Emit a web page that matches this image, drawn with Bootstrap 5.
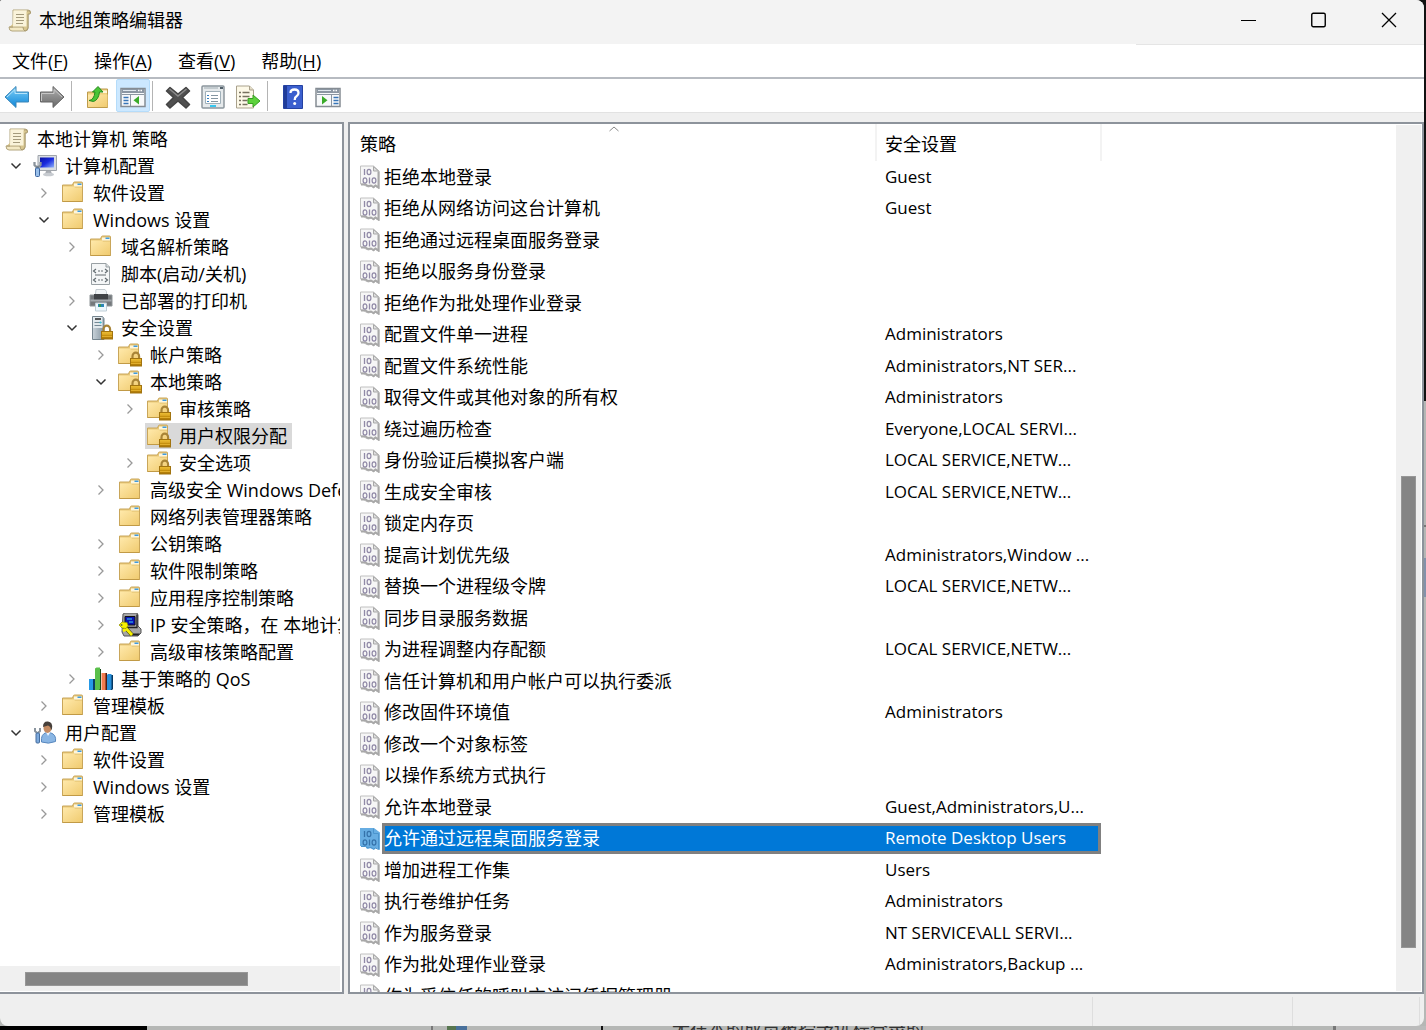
<!DOCTYPE html>
<html lang="zh-CN">
<head>
<meta charset="utf-8">
<meta name="viewport" content="width=device-width, initial-scale=1">
<title>本地组策略编辑器</title>
<link href="https://cdn.jsdelivr.net/npm/bootstrap@5.3.0/dist/css/bootstrap.min.css" rel="stylesheet">
<style>
html,body{height:100%}
body{font-family:"Open Sans","Noto Sans CJK SC",sans-serif;font-size:18px;line-height:26px;color:#000;background:#b4b4b4;overflow:hidden}
.desk{background:linear-gradient(#111 0 401px,#b5b7b5 401px 525px,#777 525px 527px,#b5b7b5 527px 558px,#8492aa 558px 597px,#b5b7b5 597px)}
.win{background:#efefef;margin-right:2px;border-radius:2px 8px 8px 8px;overflow:hidden;min-height:0}
.titlebar{height:44px;background:#f3f3f3;padding-left:8px;line-height:40px;flex:none}
.titlebar .caption-text{padding-left:7px}
.titlebar .btn{width:70px;height:40px;padding:0;border:0;border-radius:0}
.menubar{height:33px;flex:none;background:linear-gradient(#e5e5e5,#e5e5e5) right top/288px 1px no-repeat #fff}
.menubar .btn{font-size:18px;line-height:26px;padding:4px 14px 3px 12px;border:0;border-radius:0;color:#000}
.menubar u{text-underline-offset:2px;text-decoration-thickness:1px}
.toolbar{height:36px;flex:none;background:#fff;border-top:2px solid #b7bbc1;border-bottom:1px solid #e2e2e2;gap:1px}
.toolbar .btn{width:34px;height:33px;padding:2px 0 0;border:1px solid transparent;border-radius:2px;display:flex;align-items:center;justify-content:center}
.toolbar .btn.active{background:#cce8ff;border-color:#b5dcfa}
.tsep{width:1px;height:30px;background:#b4b4b4;margin:0 7px 0 1px}
.panes{padding-top:9px;gap:4px;min-height:0}
.pane{background:#fff;border:2px solid #8d939b;min-height:0;min-width:0;overflow:hidden}
.tree-pane{width:344px;border-left:0}
.tree{padding-top:1px;min-height:0;margin-right:2px}
.tree ul{list-style:none;margin:0;padding:0 0 0 28px}
.tree .lvl-top ul ul ul{padding-left:29px}
.tree .lvl-root,.tree .lvl-top{padding-left:0}
.tree .lvl-root>li>.trow{padding-left:3px}
.tree .lvl-top>li>ul{padding-left:28px}
.lvl-root .trow{height:27px;display:flex;align-items:center;white-space:nowrap}
.lvl-top .trow{padding-left:5px}
.twist{width:22px;height:27px;border:0;padding:0;background:none;margin-right:4px;flex:none;display:flex;align-items:center;justify-content:center}
.node{display:flex;align-items:center;height:26px;padding:0 5px 0 2px;color:#000;text-decoration:none;flex:none}
.node svg{margin-right:8px}
.node.sel{background:#d9d9d9}
.hbar{height:25px;background:#f0f0f0;margin:0 2px 1px 0;padding:6px 0 5px 25px;flex:none}
.thumb{background:#858585;border:1px solid #979797}
.hbar .thumb{width:223px;height:14px}
.vbar{width:25px;background:#f0f0f0;margin:1px 1px 1px 0;padding:351px 5px 0}
.vbar .thumb{height:472px}
.list{table-layout:fixed;width:100%;border-collapse:collapse}
.list th{height:37px;padding:3px 0 0 8px;font-weight:400;position:relative;border-right:2px solid #f3f3f3}
.list th:first-child{padding-left:10px}
.list th:last-child{border-right:0}
.list td{padding:0;height:32px}
.list tr:nth-child(even) td{height:31px}
.c-name{width:526px}.c-val{width:225px}
.sorter{position:absolute;left:258px;top:1px;line-height:0}
.cellrow{display:flex;align-items:center;height:31px;padding-left:10px;white-space:nowrap}
.cellrow svg{margin-right:2px;flex:none}
.lbl{flex:1;height:31px;line-height:30px;padding-left:2px}
.val{font-size:17px;height:31px;line-height:30px;padding-left:9px;white-space:nowrap}
.picked .lbl,.picked .val{background:#0078d7;color:#fff}
.picked .lbl{box-shadow:inset 3px 0 #808080,inset 0 3px #808080,inset 0 -3px #808080}
.picked .val{box-shadow:inset -3px 0 #808080,inset 0 3px #808080,inset 0 -3px #808080}
.statusbar{height:32px;flex:none}
.statusbar div{border-right:1px solid #dedede;margin-top:3px}
.under{height:4px;flex:none;line-height:4px;overflow:hidden;color:#333;padding-left:672px;white-space:nowrap;background:linear-gradient(90deg,#000 147px,transparent 147px 431px,#777 431px 433px,transparent 433px 447px,#57764f 447px 456px,#48709b 456px 467px,transparent 467px 601px,#111 601px 603px,transparent 603px 1333px,#777 1333px 1336px,#bbb 1336px)}
</style>
<script src="https://cdn.jsdelivr.net/npm/bootstrap@5.3.0/dist/js/bootstrap.bundle.min.js"></script>
</head>
<body>
<svg width="0" height="0" class="position-absolute" aria-hidden="true">
<defs>
<linearGradient id="gf" x1="0" y1="0" x2="1" y2="1"><stop offset="0" stop-color="#ffe9ab"/><stop offset="1" stop-color="#f0cb70"/></linearGradient>
<linearGradient id="gb" x1="0" y1="0" x2="0" y2="1"><stop offset="0" stop-color="#7fd0f8"/><stop offset="1" stop-color="#0d85d8"/></linearGradient>
<linearGradient id="gg" x1="0" y1="0" x2="0" y2="1"><stop offset="0" stop-color="#b0b0b0"/><stop offset="1" stop-color="#686868"/></linearGradient>
<linearGradient id="gl" x1="0" y1="0" x2="0" y2="1"><stop offset="0" stop-color="#f3c63c"/><stop offset=".5" stop-color="#c8920f"/><stop offset="1" stop-color="#a87405"/></linearGradient>
<linearGradient id="gs" x1="0" y1="0" x2="1" y2="1"><stop offset="0" stop-color="#0a12a0"/><stop offset=".5" stop-color="#1a2be0"/><stop offset="1" stop-color="#8fb2f8"/></linearGradient>
<linearGradient id="gt" x1="0" y1="0" x2="1" y2="0"><stop offset="0" stop-color="#c9d3da"/><stop offset="1" stop-color="#8595a1"/></linearGradient>
</defs>
<symbol id="i-scroll" viewBox="0 0 24 24"><path d="M5 2h15q3 0 2.500 3H20v15q0 3-3 3H4q-3 0-3-4h4z" fill="#f4e9c4" stroke="#b3a67e"/><path d="M19 3q2-1 3.500 1l-.5 2h-2V20q-.5 2.500-3 3-2-1-2-4H1.500" fill="#d8c68f" stroke="#a99a70"/><path d="M5.500 2.500H18.500v16H5z" fill="#faf3da"/><path d="M8 6.500h8M8 9.500h8M8 12.500h8M8 15.500h7" stroke="#a49a7c" stroke-width="1.200"/></symbol>
<symbol id="i-folder" viewBox="0 0 24 24"><path d="M1.500 4h10l1-2.500q.3-.5 1-.5h7q1 0 1 1v18.500h-20z" fill="#e8c878" stroke="#c9a65a"/><path d="M13 2.500h8v3h-8z" fill="#fdf6dd"/><path d="M16.500 2.500h4v1.500h-4z" fill="#3f9be0"/><path d="M2 5.500h11l1 1.200h7V20H2z" fill="url(#gf)"/><path d="M1.500 20.500h20" stroke="#c19a46"/></symbol>
<symbol id="i-lock" viewBox="0 0 24 24"><path d="M14.500 17v-3.500a3.300 3.800 0 0 1 6.600 0V17" fill="none" stroke="#a88437" stroke-width="2.200"/><rect x="12.500" y="15.500" width="11" height="7.500" fill="url(#gl)" stroke="#a27410"/><path d="M13 18h10M13 20.500h10" stroke="#eab836" stroke-width=".8"/></symbol>
<symbol id="i-flock" viewBox="0 0 24 24"><use href="#i-folder" x="-1" width="24" height="24"/><use href="#i-lock" width="24" height="24"/></symbol>
<symbol id="i-server" viewBox="0 0 24 24"><path d="M3.500.5h10l1.500 2v21H3.500z" fill="url(#gt)" stroke="#75858f"/><path d="M4 1h9.500v11H4z" fill="#e2e9ed"/><path d="M6 3h6" stroke="#222" stroke-width="1.500"/><path d="M5.500 6.500h7M5.500 9.500h7" stroke="#758894"/><circle cx="11.500" cy="6.500" r="1" fill="#29c7d8"/><use href="#i-lock" width="24" height="24"/></symbol>
<symbol id="i-pc" viewBox="0 0 24 24"><path d="M5 1.500h18.500V16.500H5z" fill="#d9dde2" stroke="#a0a5ab"/><path d="M7 3.500h14v10H7z" fill="url(#gs)"/><path d="M13 17h5l1 3H12z" fill="#a9adb3"/><ellipse cx="15.500" cy="20.500" rx="5.500" ry="1.800" fill="#c7cbd0"/><path d="M1.500 8v3l2 2h2l2-2V8" fill="none" stroke="#8b949c" stroke-width="2.300"/><path d="M4.500 12v3" stroke="#7b858d" stroke-width="2.500"/><rect x="2.500" y="14" width="4" height="8.500" rx="1" fill="#99bfea" stroke="#3c659d"/></symbol>
<symbol id="i-user" viewBox="0 0 24 24"><path d="M8.500 21q-1-8 5-9.500l4 .3q6 1.700 5 8.700-7 3-14 .5z" fill="#8ab6e4" stroke="#5988be"/><path d="M13 11l2 4 2.500-4z" fill="#eff6ff"/><ellipse cx="14.500" cy="7" rx="4" ry="5" fill="#c48b62"/><path d="M10 6q0-6 5-5.500 5 .5 4 7l-1 2q0-4-3-5z" fill="#47403b"/><path d="M2 7v3l2 2h1l2-2V7" fill="none" stroke="#89949e" stroke-width="2"/><rect x="3" y="12" width="3.500" height="10" rx="1" fill="#7ca9dc" stroke="#456d9e"/></symbol>
<symbol id="i-script" viewBox="0 0 24 24"><path d="M2.500 1.500H17l3.500 3.500v17.500h-18z" fill="#f4f6f7" stroke="#99a0a4"/><path d="M17 1.500V5h3.500" fill="#d7dcdf" stroke="#99a0a4"/><path d="M7 7l-2.500 2 2.500 2M16 7l2.500 2-2.500 2M9 9h2M12 9h2M6 13h11M7 16l-2.500 2 2.500 2M16 16l2.500 2-2.500 2M9 18h2M12 18h2" fill="none" stroke="#626b70" stroke-width="1.200"/></symbol>
<symbol id="i-print" viewBox="0 0 24 24"><path d="M7 .5h9l1.500 2V9H6z" fill="#f1f4f6" stroke="#c3cbd0"/><path d="M1 6h22v11H1z" fill="#75797c" stroke="#909699"/><path d="M5 5h14v6H5z" fill="#404346"/><path d="M1.500 11.500h21" stroke="#a5aaae" stroke-width="2"/><path d="M6.500 14h11v8h-11z" fill="#edf8fe" stroke="#bfcdd5"/><path d="M9 15h6v3H9z" fill="#2b85b7"/><path d="M10 15h2v3h-2z" fill="#3a9856"/></symbol>
<symbol id="i-key" viewBox="0 0 24 24"><path d="M5 1l2-1h12l1 2v11l3 3v4l-3 3H6l-2-4z" fill="#a6a6a6" stroke="#555"/><path d="M19 1.500v13H8" fill="none" stroke="#222" stroke-width="1.300"/><path d="M7 3.500h10v8.500H7z" fill="#0714b5" stroke="#111"/><path d="M9 6h5M11 9h4" stroke="#3fd3ee"/><path d="M14 20.500h8l-2 2h-6z" fill="#222"/><path d="M5 12l9 10" stroke="#444500" stroke-width="4"/><path d="M5 12l9 10M8 16l-3 2" stroke="#f7f000" stroke-width="2.800"/><path d="M1 12l3-3 5 .5 1 3-2 3-4-.5z" fill="#f7f000" stroke="#8c8c00" stroke-width=".7"/><circle cx="3.500" cy="12" r="1" fill="#665"/></symbol>
<symbol id="i-bars" viewBox="0 0 24 24"><path d="M2 12h4l1-1v12H2z" fill="#0c3d68"/><path d="M0 12h4v11H0z" fill="#2699e6"/><path d="M8 2h4v21H8z" fill="#174718"/><path d="M6 1.500L7.500.5H11V22l-1 1H6z" fill="#59bf4a"/><path d="M14 6h4v17h-4z" fill="#4f1c12"/><path d="M12.500 6h4v17h-4z" fill="#f27c50"/><path d="M20 8h4v14l-1 1h-3z" fill="#07375f"/><path d="M18 8l1-1h3.500v15l-1 1H18z" fill="#278fda"/></symbol>
<symbol id="i-bindigits" viewBox="0 0 20 24"><path d="M4.500 4v6" fill="none" stroke-width="1.300"/><ellipse cx="9" cy="7" rx="1.900" ry="2.700" fill="none" stroke-width="1.200"/><ellipse cx="5" cy="15.500" rx="1.900" ry="2.700" fill="none" stroke-width="1.200"/><path d="M9.500 12.500v6" fill="none" stroke-width="1.300"/><ellipse cx="14" cy="15.500" rx="1.900" ry="2.700" fill="none" stroke-width="1.200"/></symbol>
<symbol id="i-bin" viewBox="0 0 20 24"><path d="M.5 1h13l5.500 5v17.500l-3.500-2-2 1.500-2-2-3 1-3-1-2-2h-3z" fill="#f6f6f6" stroke="#c0c0c0"/><path d="M13.500 1.500l5 4.500h-5z" fill="#dedede" stroke="#a8a8a8"/><path d="M18.500 6.500V22.500l-3-2-2 1.500-2.500-1.500-3 .5-2.500-1.500H1" fill="none" stroke="#a8a8a8" stroke-width="2"/><use href="#i-bindigits" width="20" height="24" stroke="#9089a6"/></symbol>
<symbol id="i-binsel" viewBox="0 0 20 24"><path d="M0 1h14l6 4.500v17.500l-4-2-2 2-4-2-3 1-2-3H0z" fill="#67ade2"/><path d="M13.500 1.500v5h5v16l-3-1.500-2 1-2.500-1.500-3 .5-2.500-1.500H1" fill="none" stroke="#4b94cd"/><use href="#i-bindigits" width="20" height="24" stroke="#3572aa"/></symbol>
<symbol id="i-right" viewBox="0 0 10 12"><path d="M2.500 1.500L7 6l-4.500 4.500" fill="none" stroke="#999" stroke-width="1.300"/></symbol>
<symbol id="i-down" viewBox="0 0 12 10"><path d="M1.500 2.500L6 7l4.500-4.500" fill="none" stroke="#333" stroke-width="1.500"/></symbol>
<symbol id="i-panel" viewBox="0 0 26 24"><path d="M1 3.500h24v18H1z" fill="#f7f9fa" stroke="#858c93" stroke-width="1.500"/><path d="M2 4h22v4H2z" fill="#8b96a2"/><path d="M3 5.500h13" stroke="#dfe6ec"/><path d="M18 5.500h1.500M20.500 5.500H22" stroke="#fff" stroke-width="1.500"/><path d="M2 9.500h22" stroke="#8b96a2"/></symbol>
</svg>

<div class="desk d-flex flex-column vh-100">
<div class="win d-flex flex-column flex-grow-1">
  <header class="titlebar d-flex">
    <svg width="24" height="24" class="mt-2 flex-shrink-0"><use href="#i-scroll"/></svg>
    <span class="flex-grow-1 caption-text">本地组策略编辑器</span>
    <button class="btn" type="button" aria-label="最小化"><svg width="16" height="16" class="d-block mx-auto"><path d="M0 8.500h15" stroke="#000"/></svg></button>
    <button class="btn" type="button" aria-label="最大化"><svg width="16" height="16" class="d-block mx-auto"><rect x=".75" y="1.250" width="13.500" height="13.500" rx="1.500" fill="none" stroke="#000" stroke-width="1.400"/></svg></button>
    <button class="btn" type="button" aria-label="关闭"><svg width="16" height="16" class="d-block mx-auto"><path d="M1 1l14 14M15 1L1 15" stroke="#000" stroke-width="1.300"/></svg></button>
  </header>
  <nav class="menubar d-flex" aria-label="菜单">
    <button class="btn" type="button">文件(<u>F</u>)</button><button class="btn" type="button">操作(<u>A</u>)</button><button class="btn" type="button">查看(<u>V</u>)</button><button class="btn" type="button">帮助(<u>H</u>)</button>
  </nav>
  <div class="toolbar d-flex align-items-center" role="toolbar" aria-label="工具栏">
    <button class="btn" type="button" aria-label="后退"><svg width="26" height="24"><path d="M1 12L12 1.500V7h12.500v10H12v5.500z" fill="url(#gb)" stroke="#3b86b8"/><path d="M3 12l8-7.500V8.500h12" fill="none" stroke="#b5e4fb"/></svg></button>
    <button class="btn" type="button" aria-label="前进"><svg width="26" height="24"><path d="M25 12L14 1.500V7H1.500v10H14v5.500z" fill="url(#gg)" stroke="#646464"/><path d="M2.500 16V8.500H15V4.500l8 7.500" fill="none" stroke="#c6c6c6"/></svg></button>
    <span class="tsep me-2"></span>
    <button class="btn" type="button" aria-label="向上一级"><svg width="24" height="24"><path d="M1.500 7h8l2-3h10v18.500h-20z" fill="#efcf7c" stroke="#bd9b4c"/><path d="M13 5.500h8V8h-8z" fill="#fff6d7"/><path d="M2 9.500h19.500V22H2z" fill="url(#gf)"/><path d="M3 15.500q5-.5 6-8.500H6.500l5.500-5.500L17 7h-3.500q-1 8-6 9.500z" fill="#49c536" stroke="#27891d"/></svg></button>
    <button class="btn active" type="button" aria-label="显示/隐藏控制台树"><svg width="26" height="24"><use href="#i-panel"/><path d="M10.500 9v12" stroke="#8b96a2"/><path d="M3.500 12.500h5M3.500 15.500h5M3.500 18.500h5" stroke="#3775b7" stroke-width="1.500"/><path d="M19 11v8.500l-5.500-4.200z" fill="#3aab2a"/></svg></button>
    <span class="tsep"></span>
    <button class="btn" type="button" aria-label="删除"><svg width="26" height="24"><path d="M5 2.500l8 6.500 8-6.500 3.500 3.500-7 6.500 7 7-3.500 3.500-8-7-8 7L1.500 19.500l7-7L1.500 6z" fill="#505050" stroke="#444" stroke-width="1.500" stroke-linejoin="round"/><path d="M4.500 4l8.500 7 8.500-7" stroke="#8a8a8a" fill="none" stroke-width="1.500"/></svg></button>
    <button class="btn" type="button" aria-label="属性"><svg width="24" height="24"><rect x="1" y="1" width="22" height="22" rx="1" fill="#e6eaec" stroke="#8c969d" stroke-width="1.500"/><path d="M3 3h14" stroke="#b7c0c6" stroke-width="1.500"/><path d="M19 3h3" stroke="#52606a" stroke-width="2"/><path d="M4.500 6.500h15v12h-15z" fill="#fff" stroke="#a0b0b9"/><path d="M10 10.500h7M10 13.500h7M10 16.500h7" stroke="#8495a1"/><path d="M6 10.500h2M6 13.500h2M6 16.500h2" stroke="#337fc2"/><path d="M9 20h6v2H9z" fill="#39c6ee"/></svg></button>
    <button class="btn" type="button" aria-label="导出列表"><svg width="26" height="24"><path d="M1.500 1h13l4 4v18h-17z" fill="#fdf9e8" stroke="#a9a18c"/><path d="M14.500 1v4h4" fill="#e5dec7" stroke="#a9a18c"/><path d="M4 7.500h2M4 11.500h2M4 15.500h2M4 19.500h2M7.500 7.500h7M7.500 11.500h7M7.500 15.500h5M7.500 19.500h5" stroke="#77715f" stroke-width="1.500"/><path d="M13 13.500h5V10l7 6-7 6v-3.500h-5z" fill="#5cd13b" stroke="#379f22"/></svg></button>
    <span class="tsep"></span>
    <button class="btn" type="button" aria-label="帮助"><svg width="20" height="24"><path d="M.5.5h19v23H.5z" fill="#3b5fce" stroke="#2542a2"/><path d="M1 1h3v22H1z" fill="#203c99"/><path d="M7.500 8q0-3.500 4-3.500t4 3.500q0 2-2 3.300-1.800 1-1.800 3.700" fill="none" stroke="#fff" stroke-width="2.300"/><circle cx="11.700" cy="18.500" r="1.500" fill="#fff"/></svg></button>
    <button class="btn" type="button" aria-label="显示/隐藏操作窗格"><svg width="26" height="24"><use href="#i-panel"/><path d="M16.500 9v12" stroke="#8b96a2"/><path d="M18.500 12.500h5M18.500 15.500h5M18.500 18.500h5" stroke="#3775b7" stroke-width="1.500"/><path d="M7 11v8.500l5.500-4.200z" fill="#3aab2a"/></svg></button>
  </div>
  <main class="panes d-flex flex-grow-1">
    <section class="pane tree-pane d-flex flex-column flex-shrink-0">
      <nav class="tree flex-grow-1 overflow-hidden" id="tree" aria-label="控制台树"></nav>
      <div class="hbar"><div class="thumb"></div></div>
    </section>
    <section class="pane d-flex flex-grow-1">
      <div class="flex-grow-1 overflow-hidden">
        <table class="list">
          <colgroup><col class="c-name"><col class="c-val"><col></colgroup>
          <thead><tr><th scope="col">策略<span class="sorter"><svg width="12" height="8"><path d="M1.500 6L6 2l4.500 4" fill="none" stroke="#888"/></svg></span></th><th scope="col">安全设置</th><th></th></tr></thead>
          <tbody id="rows"></tbody>
        </table>
      </div>
      <div class="vbar flex-shrink-0"><div class="thumb"></div></div>
    </section>
  </main>
  <footer class="statusbar d-flex"><div class="flex-grow-1"></div><div style="width:200px"></div><div class="me-1" style="width:127px"></div></footer>
</div>
<div class="under">无在本的成员被授予远程登录的</div>
</div>
<script>
// Tree node: [icon, text, state, children, selected]; state is "open", "shut" or "" for a leaf
const F='folder', L='flock';
const nodes=[
 ['pc','计算机配置','open',[
  [F,'软件设置','shut'],
  [F,'Windows 设置','open',[
   [F,'域名解析策略','shut'],
   ['script','脚本(启动/关机)',''],
   ['print','已部署的打印机','shut'],
   ['server','安全设置','open',[
    [L,'帐户策略','shut'],
    [L,'本地策略','open',[[L,'审核策略','shut'],[L,'用户权限分配','',null,true],[L,'安全选项','shut']]],
    [F,'高级安全 Windows Defender','shut'],
    [F,'网络列表管理器策略',''],
    [F,'公钥策略','shut'],
    [F,'软件限制策略','shut'],
    [F,'应用程序控制策略','shut'],
    ['key','IP 安全策略，在 本地计算机','shut'],
    [F,'高级审核策略配置','shut']]],
   ['bars','基于策略的 QoS','shut']]],
  [F,'管理模板','shut']]],
 ['user','用户配置','open',[[F,'软件设置','shut'],[F,'Windows 设置','shut'],[F,'管理模板','shut']]]
];
const link=(i,t,s)=>`<a href="#" class="node${s?' sel':''}"><svg width="24" height="24"><use href="#i-${i}"/></svg>${t}</a>`;
const twist=s=>s==='open'?'<button type="button" class="twist" aria-label="折叠"><svg width="12" height="10"><use href="#i-down"/></svg></button>'
 :s==='shut'?'<button type="button" class="twist" aria-label="展开"><svg width="10" height="12"><use href="#i-right"/></svg></button>':'<span class="twist"></span>';
const branch=(a,c='')=>`<ul class="${c}">`+a.map(([i,t,s,k,x])=>`<li><div class="trow">${twist(s)}${link(i,t,x)}</div>${k?branch(k):''}</li>`).join('')+'</ul>';
document.getElementById('tree').innerHTML=`<ul class="lvl-root"><li><div class="trow">${link('scroll','本地计算机 策略')}</div>${branch(nodes,'lvl-top')}</li></ul>`;

const data=[['拒绝本地登录','Guest'],['拒绝从网络访问这台计算机','Guest'],['拒绝通过远程桌面服务登录',''],['拒绝以服务身份登录',''],['拒绝作为批处理作业登录',''],
['配置文件单一进程','Administrators'],['配置文件系统性能','Administrators,NT SER...'],['取得文件或其他对象的所有权','Administrators'],['绕过遍历检查','Everyone,LOCAL SERVI...'],
['身份验证后模拟客户端','LOCAL SERVICE,NETW...'],['生成安全审核','LOCAL SERVICE,NETW...'],['锁定内存页',''],['提高计划优先级','Administrators,Window ...'],
['替换一个进程级令牌','LOCAL SERVICE,NETW...'],['同步目录服务数据',''],['为进程调整内存配额','LOCAL SERVICE,NETW...'],['信任计算机和用户帐户可以执行委派',''],
['修改固件环境值','Administrators'],['修改一个对象标签',''],['以操作系统方式执行',''],['允许本地登录','Guest,Administrators,U...'],['允许通过远程桌面服务登录','Remote Desktop Users'],
['增加进程工作集','Users'],['执行卷维护任务','Administrators'],['作为服务登录','NT SERVICE\\ALL SERVI...'],['作为批处理作业登录','Administrators,Backup ...'],['作为受信任的呼叫方访问凭据管理器','']];
document.getElementById('rows').innerHTML=data.map(([n,v],i)=>`<tr class="${i===21?'picked':''}"><td><div class="cellrow"><svg width="20" height="24"><use href="#i-${i===21?'binsel':'bin'}"/></svg><span class="lbl">${n}</span></div></td><td><div class="val">${v}</div></td><td></td></tr>`).join('');
</script>
</body>
</html>
